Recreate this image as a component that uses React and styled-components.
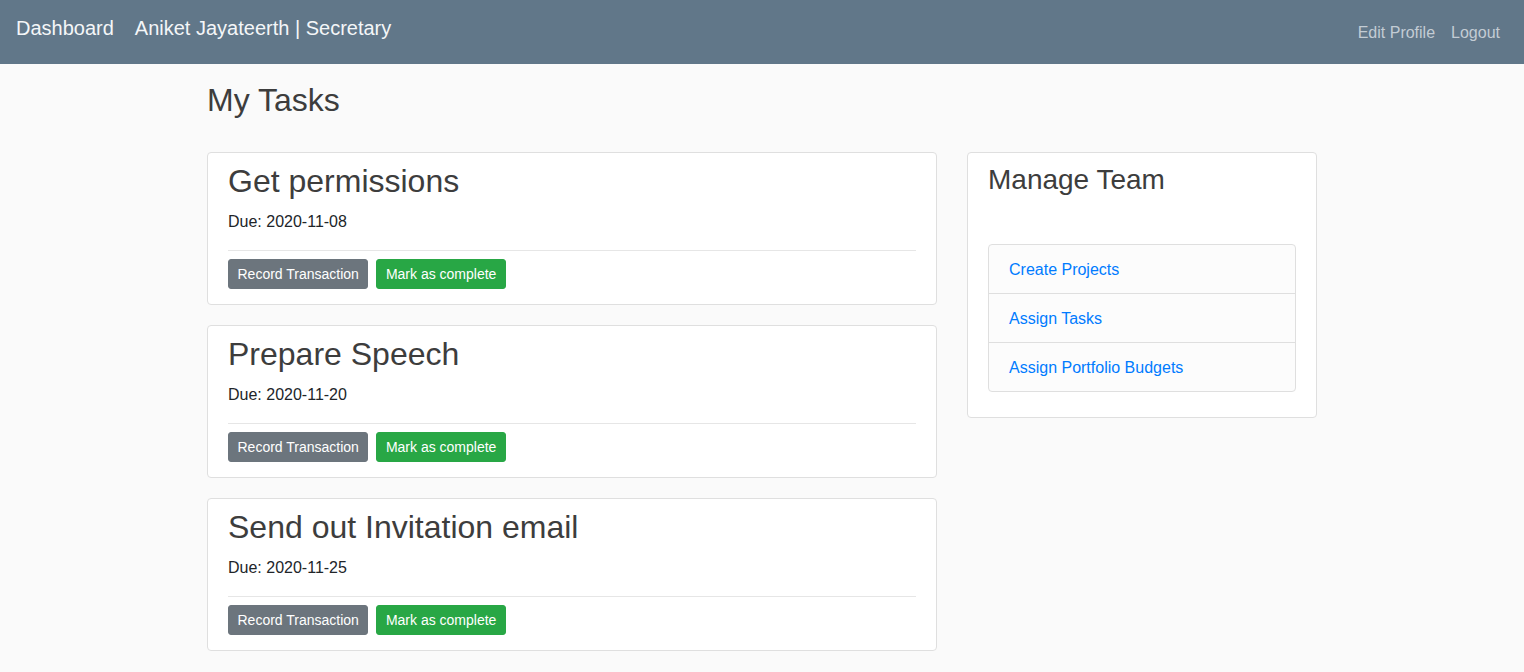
import React from "react";
import styled, { createGlobalStyle } from "styled-components";

const GlobalStyle = createGlobalStyle`
    * { box-sizing: border-box; }
    body {
        margin: 0;
        background: #fafafa;
        font-family: "Liberation Sans", Arial, sans-serif;
        font-size: 16px;
        line-height: 1.5;
        color: #212529;
    }
`;

const tasks = [
    { id: 1, title: "Get permissions", due: "2020-11-08" },
    { id: 2, title: "Prepare Speech", due: "2020-11-20" },
    { id: 3, title: "Send out Invitation email", due: "2020-11-25" },
];

const links = ["Create Projects", "Assign Tasks", "Assign Portfolio Budgets"];

const App = () => {
    return (
        <>
            <GlobalStyle />
            <Navbar>
                <NavLeft>
                    <Brand>Dashboard</Brand>
                    <Brand>Aniket Jayateerth | Secretary</Brand>
                </NavLeft>
                <NavRight>
                    <NavLink>Edit Profile</NavLink>
                    <NavLink>Logout</NavLink>
                </NavRight>
            </Navbar>
            <Container>
                <PageTitle>My Tasks</PageTitle>
                <Row>
                    <MainCol>
                        {tasks.map((task) => (
                            <Card key={task.id}>
                                <TaskTitle>{task.title}</TaskTitle>
                                <Due>Due: {task.due}</Due>
                                <Divider />
                                <BtnGroup>
                                    <Btn variant="secondary">Record Transaction</Btn>
                                    <Btn variant="success">Mark as complete</Btn>
                                </BtnGroup>
                            </Card>
                        ))}
                    </MainCol>
                    <SideCol>
                        <SideCard>
                            <SideTitle>Manage Team</SideTitle>
                            <ListGroup>
                                {links.map((link) => (
                                    <ListItem key={link}>
                                        <ListLink href="#">{link}</ListLink>
                                    </ListItem>
                                ))}
                            </ListGroup>
                        </SideCard>
                    </SideCol>
                </Row>
            </Container>
        </>
    );
};

export default App;

const Navbar = styled.nav`
    height: 64px;
    background-color: #617789;
    display: flex;
    justify-content: space-between;
    padding: 0 24px 0 16px;
`;
const NavLeft = styled.div`
    display: flex;
    gap: 21px;
    padding-top: 13px;
`;
const Brand = styled.span`
    font-size: 20px;
    line-height: 30px;
    color: #f4f6f8;
`;
const NavRight = styled.div`
    display: flex;
    gap: 16px;
    padding-top: 21px;
`;
const NavLink = styled.span`
    font-size: 16px;
    line-height: 24px;
    color: #c3ccd4;
`;
const Container = styled.div`
    width: 1110px;
    margin: 0 auto;
`;
const PageTitle = styled.h2`
    font-size: 32px;
    font-weight: 400;
    line-height: 38px;
    color: #3d3d3d;
    margin: 17px 0 33px;
`;
const Row = styled.div`
    display: flex;
    gap: 30px;
    align-items: flex-start;
`;
const MainCol = styled.div`
    width: 730px;
    display: flex;
    flex-direction: column;
    gap: 20px;
`;
const SideCol = styled.div`
    width: 350px;
`;
const Card = styled.div`
    background: #fff;
    border: 1px solid #dfdfdf;
    border-radius: 4px;
    padding: 9px 20px 15px;
`;
const TaskTitle = styled.h2`
    font-size: 32px;
    font-weight: 400;
    line-height: 38px;
    color: #3d3d3d;
    margin: 0 0 10px;
`;
const Due = styled.p`
    margin: 0;
    line-height: 24px;
`;
const Divider = styled.hr`
    border: 0;
    border-top: 1px solid #e6e6e6;
    margin: 16px 0 8px;
`;
const BtnGroup = styled.div`
    display: flex;
    gap: 8px;
`;
const Btn = styled.button`
    font-family: inherit;
    font-size: 14px;
    line-height: 20px;
    padding: 4px 8.5px;
    border-radius: 3px;
    border: 1px solid ${(p) => (p.variant === "success" ? "#28a745" : "#6c757d")};
    background: ${(p) => (p.variant === "success" ? "#28a745" : "#6c757d")};
    color: #fff;
`;
const SideCard = styled.div`
    background: #fff;
    border: 1px solid #dfdfdf;
    border-radius: 4px;
    padding: 10px 20px 25px;
`;
const SideTitle = styled.h3`
    font-size: 28px;
    font-weight: 400;
    line-height: 34px;
    color: #3d3d3d;
    margin: 0 0 47px;
`;
const ListGroup = styled.ul`
    list-style: none;
    margin: 0;
    padding: 0;
    border: 1px solid #dfdfdf;
    border-radius: 4px;
    background: #fcfcfc;
`;
const ListItem = styled.li`
    height: 48px;
    display: flex;
    align-items: center;
    padding: 1px 20px 0;
    & + & {
        height: 49px;
        border-top: 1px solid #dfdfdf;
    }
`;
const ListLink = styled.a`
    color: #007bff;
    text-decoration: none;
`;
